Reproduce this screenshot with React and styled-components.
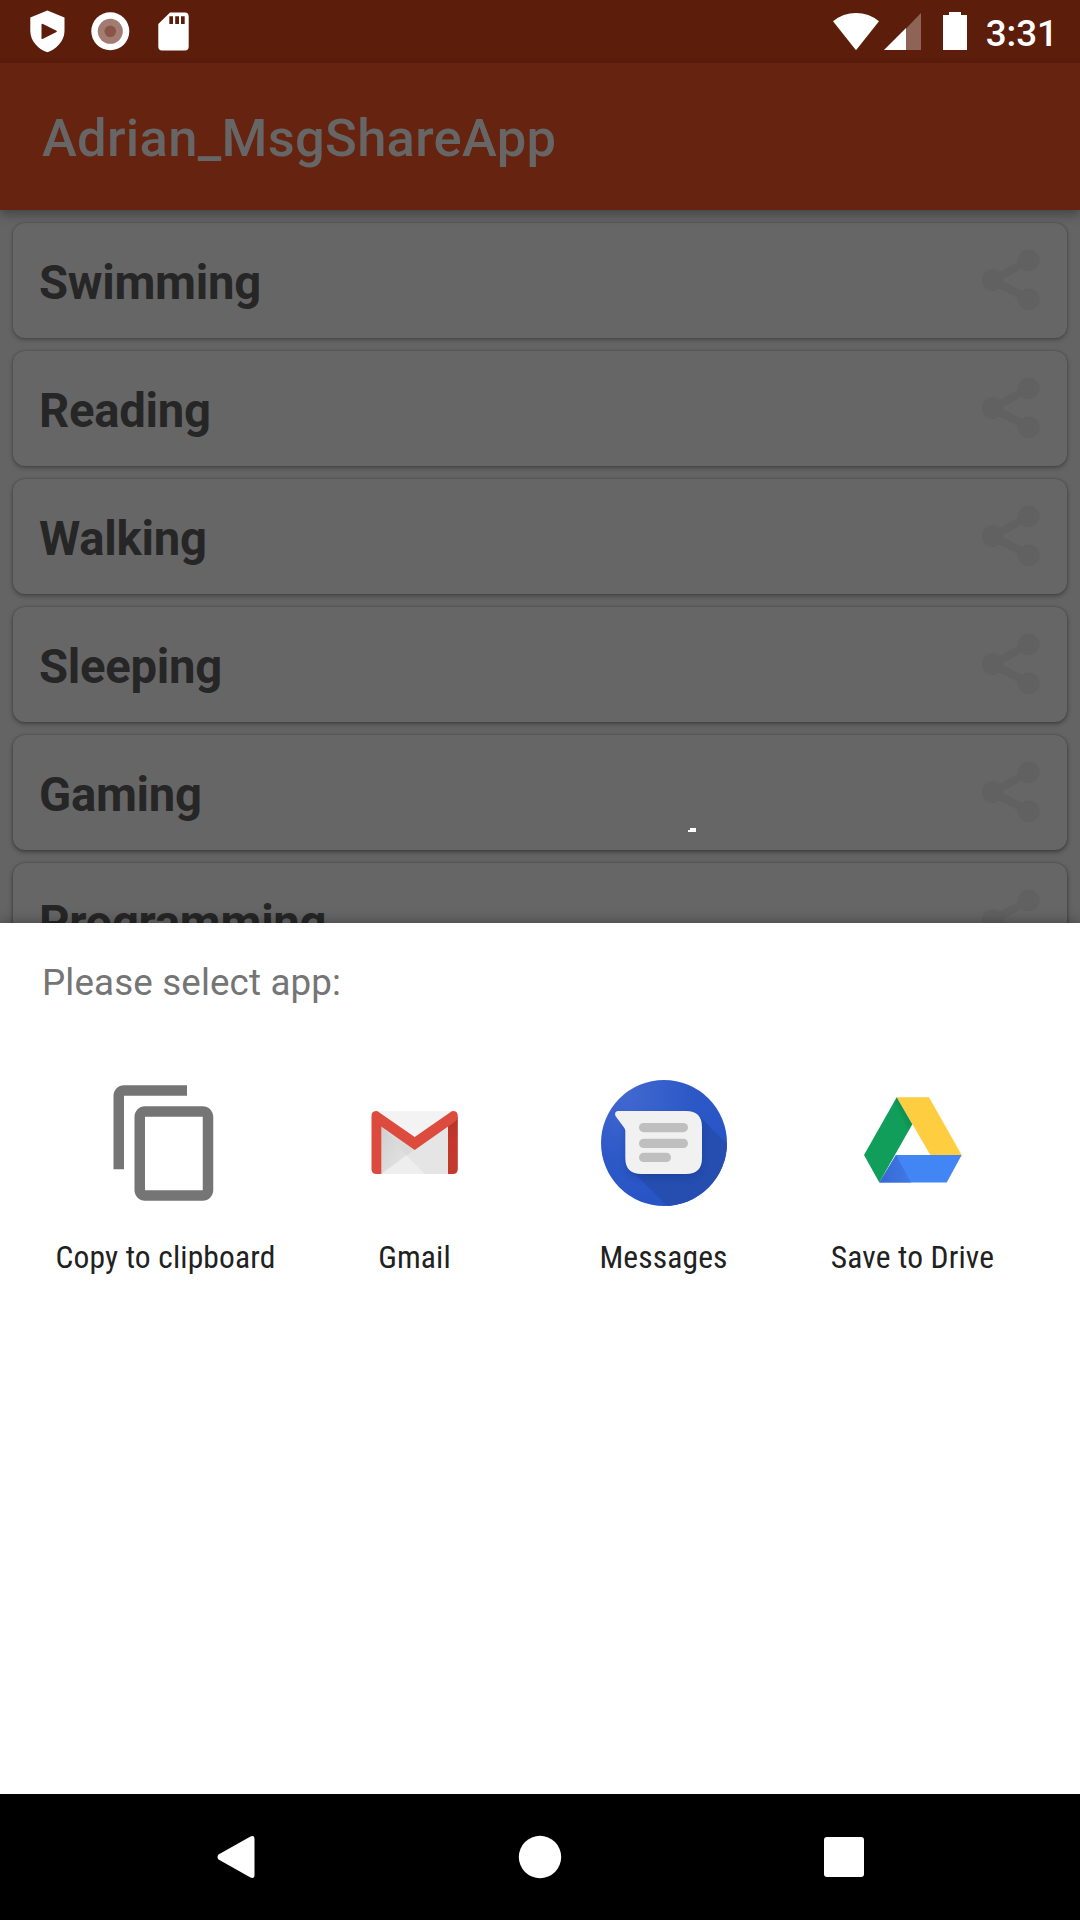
import React from "react";
import styled, { createGlobalStyle } from "styled-components";

const Global = createGlobalStyle`
  * { box-sizing: border-box; }
  body { margin: 0; background: #000; font-family: Roboto, "Liberation Sans", sans-serif; }
  svg { display: block; }
`;

const Screen = styled.div`
  position: relative;
  display: flex;
  flex-direction: column;
  width: 1080px;
  height: 1920px;
  overflow: hidden;
`;

const StatusBar = styled.header`
  display: flex;
  justify-content: space-between;
  flex: none;
  height: 63px;
  padding: 0 22px 0 28px;
  background: #5c1d0b;
`;

const StatusGroup = styled.div`
  display: flex;
  align-items: flex-start;
  height: 63px;
`;

const Clock = styled.span`
  margin-left: 17px;
  color: #fff;
  font-size: 36.75px;
  font-weight: 500;
  line-height: 43px;
  padding-top: 12px;
`;

const AppBar = styled.div`
  position: relative;
  z-index: 1;
  display: flex;
  align-items: center;
  flex: none;
  height: 147px;
  padding: 2px 42px 0;
  background: #66230f;
  box-shadow: 0 5px 10px rgba(0, 0, 0, 0.3);
`;

const AppTitle = styled.h1`
  margin: 0;
  color: #666;
  font-size: 52.5px;
  font-weight: 500;
  letter-spacing: 0.3px;
  line-height: 62px;
`;

const List = styled.main`
  display: flex;
  flex-direction: column;
  gap: 13px;
  flex: none;
  height: 713px;
  padding: 13px 13px 0;
  overflow: hidden;
  background: #646464;
`;

const Card = styled.article`
  display: flex;
  align-items: center;
  justify-content: space-between;
  flex: none;
  height: 115px;
  padding: 0 23px 0 26px;
  border-radius: 12px;
  background: #666;
  box-shadow: 0 2px 5px rgba(0, 0, 0, ${(p) => p.$shade}), 0 0 2px rgba(0, 0, 0, 0.25);
`;

const CardTitle = styled.h2`
  margin: 0;
  padding-top: 5px;
  color: #262626;
  font-size: 47.25px;
  font-weight: 700;
  letter-spacing: -0.28px;
  line-height: 56px;
`;

const Sheet = styled.section`
  position: relative;
  flex: none;
  height: 871px;
  padding: 0 42px;
  background: #fff;
  box-shadow: 0 -2px 12px rgba(0, 0, 0, 0.28);
`;

const SheetTitle = styled.p`
  margin: 0;
  padding-top: 38px;
  color: #757575;
  font-size: 36.75px;
  letter-spacing: 0.14px;
  line-height: 44px;
`;

const Targets = styled.div`
  display: grid;
  grid-template-columns: repeat(4, 249px);
  margin: 75px 0 0 -1px;
`;

const Target = styled.div`
  display: flex;
  flex-direction: column;
  align-items: center;
  gap: 33px;
`;

const TargetLabel = styled.span`
  color: #212121;
  font-family: "Roboto Condensed", Roboto, "Liberation Sans", sans-serif;
  font-size: 31.5px;
  letter-spacing: 0.15px;
  line-height: 38px;
  white-space: nowrap;
`;

const NavBar = styled.nav`
  display: flex;
  align-items: center;
  justify-content: space-between;
  position: relative;
  flex: none;
  height: 126px;
  padding: 0 205px;
  background: #000;
`;

const Speck = styled.svg`
  position: absolute;
  left: 688px;
  top: 828px;
`;

const StatusLeftIcons = () => (
  <svg width="170" height="63" viewBox="28 0 170 63">
    <path fill="#fff" fillRule="evenodd" d="M47.4 10.5 L64.5 17.5 V31 C64.5 41 56 49.5 47.4 52.2 C38.500 49.500 30.300 41 30.300 31 V17.500 Z M41.500 24.500 V38.500 Q42 39.500 43 38.800 L56.500 32 Q57.300 31.300 56.500 30.700 L43 24 Q42 23.500 41.500 24.500 Z" />
    <circle cx="110.300" cy="31.300" r="19" fill="#fff" />
    <circle cx="110.300" cy="31.300" r="12.500" fill="#a27c72" />
    <circle cx="110.300" cy="31.300" r="5.800" fill="#885546" />
    <path fill="#fff" fillRule="evenodd" d="M170 12.500 H185 Q188.700 12.500 188.700 16.500 V46.500 Q188.700 50.500 185 50.500 H162 Q158.300 50.500 158.300 46.500 V24 Z M169.300 16.300 V24 H173 V16.300 Z M175.200 16.300 V24 H179 V16.300 Z M181 16.300 V24 H184.700 V16.300 Z" />
  </svg>
);

const StatusRightIcons = () => (
  <svg width="138" height="63" viewBox="831 0 138 63">
    <path fill="#fff" d="M856 50.300 L833 21.300 Q843 13 856 13 Q869 13 879 21.300 Z" />
    <path fill="#8e6458" d="M906 50 V28.500 L921 13 V50 Z" />
    <path fill="#fff" d="M884 50 L906 28 V50 Z" />
    <path fill="#fff" d="M943 15 H949 V12 H961 V15 H967 V50 H943 Z" />
  </svg>
);

const ShareIcon = () => (
  <svg width="64" height="65" viewBox="980 248 64 65" fill="#616161">
    <path d="M1028.700 260.300 L992.600 280.200 L1028.700 299.300" fill="none" stroke="#616161" strokeWidth="8" />
    <circle cx="992.600" cy="280" r="10.800" />
    <circle cx="1028.700" cy="260.300" r="10.800" />
    <circle cx="1028.700" cy="299.200" r="10.800" />
  </svg>
);

const CopyIcon = () => (
  <svg width="126" height="126" viewBox="0 0 24 24" fill="#757575">
    <path d="M16 1H4c-1.100 0-2 .9-2 2v14h2V3h12V1zm3 4H8c-1.100 0-2 .9-2 2v14c0 1.100.9 2 2 2h11c1.100 0 2-.9 2-2V7c0-1.100-.9-2-2-2zm0 16H8V7h11v14z" />
  </svg>
);

const GmailIcon = () => (
  <svg width="126" height="126" viewBox="0 0 126 126">
    <defs>
      <linearGradient id="gm-fold" x1="0" y1="0" x2="1" y2="1">
        <stop offset="0" stopColor="#cfcfcf" />
        <stop offset="1" stopColor="#e6e6e6" />
      </linearGradient>
      <linearGradient id="gm-right" x1="0" y1="0" x2="0" y2="1">
        <stop offset="0" stopColor="#b5332a" />
        <stop offset="0.400" stopColor="#c5372c" />
        <stop offset="1" stopColor="#c23a2d" />
      </linearGradient>
    </defs>
    <path fill="#eaeaea" d="M24 31 H102 V94 H24 Z" />
    <path fill="#f3f3f3" d="M25 31 H100 L62.700 57 Z" />
    <path fill="url(#gm-fold)" d="M29 45 L56 74 L29 94 Z" />
    <path fill="#dadada" d="M29 45 L62.700 70 L54.500 76 Z" />
    <path fill="#eeeeee" d="M30 94 L54.700 75.500 L73 94 Z" />
    <path fill="#e5e5e5" d="M62.700 70 L96 47 V94 H73 L54.700 75.500 Z" />
    <path fill="#dc4a3f" d="M19.500 37 L29.300 45 V94 H24.500 Q19.500 94 19.500 89 Z" />
    <path fill="url(#gm-right)" d="M105.800 37 L96 45 V94 H100.800 Q105.800 94 105.800 89 Z" />
    <path fill="#dd4b3f" d="M19.500 36 Q19.500 31 24.500 31 Q26 31 28 33 L62.700 57 L97.300 33 Q99.300 31 101 31 Q105.800 31 105.800 36 Q105.800 39.500 102.500 42 L62.700 70 L22.800 42 Q19.500 39.500 19.500 36 Z" />
  </svg>
);

const MessagesIcon = () => (
  <svg width="126" height="126" viewBox="0 0 126 126">
    <defs>
      <radialGradient id="msg-bg" cx="0.200" cy="0.120" r="0.850">
        <stop offset="0" stopColor="#4168cf" />
        <stop offset="0.600" stopColor="#2d59c7" />
        <stop offset="1" stopColor="#2855c6" />
      </radialGradient>
      <clipPath id="msg-clip"><circle cx="63" cy="63" r="63" /></clipPath>
      <filter id="msg-blur" x="-20%" y="-20%" width="140%" height="150%">
        <feGaussianBlur stdDeviation="3" />
      </filter>
    </defs>
    <circle cx="63" cy="63" r="63" fill="url(#msg-bg)" />
    <g clipPath="url(#msg-clip)">
      <path fill="#254eb0" d="M98 36 L134 72 V134 H74 L33 93 Z" />
      <rect x="25" y="36" width="76" height="62" rx="15" fill="#1c3f96" opacity="0.600" filter="url(#msg-blur)" />
    </g>
    <path fill="#f1f1f1" d="M16.500 31 H85 Q101 31 101 47 V78 Q101 94 85 94 H40.500 Q24.300 94 24.300 78 V51 Q24.300 49 23 47.500 L14.500 36 Q13 32 16.500 31 Z" />
    <g fill="#bfbfbf">
      <rect x="38" y="43" width="49" height="9.200" rx="4.600" />
      <rect x="38" y="58.800" width="49" height="9.200" rx="4.600" />
      <rect x="38" y="72.800" width="32" height="9.200" rx="4.600" />
    </g>
  </svg>
);

const DriveIcon = () => (
  <svg width="126" height="126" viewBox="0 0 126 126">
    <defs>
      <linearGradient id="dr-blue" x1="0" y1="0.500" x2="1" y2="0.500">
        <stop offset="0" stopColor="#3768d2" />
        <stop offset="1" stopColor="#4079e8" />
      </linearGradient>
      <linearGradient id="dr-green" gradientUnits="userSpaceOnUse" x1="60" y1="32" x2="50" y2="37">
        <stop offset="0" stopColor="#0d8549" />
        <stop offset="1" stopColor="#119e5a" />
      </linearGradient>
    </defs>
    <path fill="#ffcd40" d="M46.700 17.300 H79 L111.700 75 H80.300 Z" />
    <path fill="#4285f4" d="M46 75 H111.700 L96.700 102.400 H29.300 Z" />
    <path fill="url(#dr-blue)" d="M46 75 L61 102.400 H29.300 Z" />
    <path fill="url(#dr-green)" d="M46.700 17.300 L62.300 44.300 L29.300 102.400 L14 75 Z" />
  </svg>
);

const BackIcon = () => (
  <svg width="60" height="60" viewBox="205 1827 60 60">
    <path fill="#fff" d="M218.500 1854.500 L250.500 1836.500 Q254.500 1835 254.500 1839 V1875 Q254.500 1879 250.500 1877.500 L218.500 1859.500 Q216.500 1857 218.500 1854.500 Z" />
  </svg>
);

const HomeIcon = () => (
  <svg width="60" height="60" viewBox="0 0 60 60">
    <circle cx="30" cy="30" r="21.200" fill="#fff" />
  </svg>
);

const RecentsIcon = () => (
  <svg width="60" height="60" viewBox="815 1827 60 60">
    <rect x="824" y="1837" width="40" height="40" rx="3" fill="#fff" />
  </svg>
);

const hobbies = ["Swimming", "Reading", "Walking", "Sleeping", "Gaming", "Programming"];

const targets = [
  { label: "Copy to clipboard", Icon: CopyIcon },
  { label: "Gmail", Icon: GmailIcon },
  { label: "Messages", Icon: MessagesIcon },
  { label: "Save to Drive", Icon: DriveIcon },
];

export default function App() {
  return (
    <Screen>
      <Global />
      <StatusBar>
        <StatusGroup><StatusLeftIcons /></StatusGroup>
        <StatusGroup>
          <StatusRightIcons />
          <Clock>3:31</Clock>
        </StatusGroup>
      </StatusBar>
      <AppBar><AppTitle>Adrian_MsgShareApp</AppTitle></AppBar>
      <List>
        {hobbies.map((name, i) => (
          <Card key={name} $shade={0.26 + i * 0.03}>
            <CardTitle>{name}</CardTitle>
            <ShareIcon />
          </Card>
        ))}
      </List>
      <Sheet>
        <SheetTitle>Please select app:</SheetTitle>
        <Targets>
          {targets.map(({ label, Icon }) => (
            <Target key={label}>
              <Icon />
              <TargetLabel>{label}</TargetLabel>
            </Target>
          ))}
        </Targets>
      </Sheet>
      <NavBar>
        <BackIcon />
        <HomeIcon />
        <RecentsIcon />
      </NavBar>
      <Speck width="8" height="4" viewBox="0 0 8 4">
        <path fill="#fff" d="M2 0 H8 V4 H0 V2 H2 Z" />
      </Speck>
    </Screen>
  );
}
